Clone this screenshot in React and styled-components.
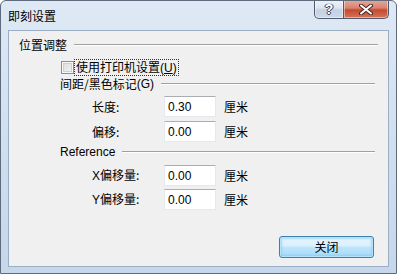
import styled, { createGlobalStyle } from "styled-components";

const GlobalStyle = createGlobalStyle`
    html, body {
        margin: 0;
        padding: 0;
        background: #ffffff;
    }
    body {
        font-family: "Noto Sans CJK SC", "Liberation Sans", sans-serif;
        font-size: 12px;
        color: #000;
    }
`;

const Window = styled.div`
    width: 397px;
    height: 274px;
    box-sizing: border-box;
    display: flex;
    flex-direction: column;
    border: 1px solid #5d6b7c;
    border-radius: 6px 6px 0 0;
    background: linear-gradient(to bottom, #dfe9f5 0%, #d3e1f0 40%, #c6d7eb 100%);
    overflow: hidden;
`;

const TitleBar = styled.div`
    height: 29px;
    display: flex;
    flex-direction: row;
    align-items: flex-start;
    justify-content: space-between;
    padding-left: 7px;
    padding-right: 7px;
`;

const Title = styled.span`
    margin-top: 8px;
    font-size: 12px;
    line-height: 14px;
    color: #000;
`;

const Controls = styled.div`
    display: flex;
    flex-direction: row;
    margin-top: -1px;
`;

const CaptionButton = styled.div`
    width: ${(p) => p.$w}px;
    height: 19px;
    box-sizing: border-box;
    display: flex;
    align-items: center;
    justify-content: center;
    border: 1px solid #4f5b6d;
    border-top: none;
    border-radius: ${(p) => (p.$close ? "0 0 5px 0" : "0 0 0 5px")};
    background: ${(p) =>
        p.$close
            ? "linear-gradient(to bottom, #e9a99b 0%, #d8826d 45%, #c44a31 55%, #d77257 100%)"
            : "linear-gradient(to bottom, #eef3f9 0%, #dbe5f1 45%, #c3d1e3 55%, #cbd9ea 100%)"};
    box-shadow: inset 0 0 0 1px rgba(255, 255, 255, 0.45);
    margin-left: ${(p) => (p.$close ? "-1px" : "0")};
`;

const HelpGlyph = styled.span`
    font-family: "Liberation Sans", sans-serif;
    font-weight: bold;
    font-size: 14px;
    line-height: 14px;
    color: #ffffff;
    text-shadow: 0 0 1px #3a4a60, 0 0 1px #3a4a60, 1px 0 0 #3a4a60, -1px 0 0 #3a4a60, 0 1px 0 #3a4a60;
`;

const Client = styled.div`
    height: 237px;
    box-sizing: border-box;
    margin: 0 7px;
    background: #f0f0f0;
    border: 1px solid #9aaec6;
    display: flex;
    flex-direction: column;
    padding-top: 7px;
`;

const GroupHeader = styled.div`
    display: flex;
    flex-direction: row;
    align-items: center;
    height: 14px;
    line-height: 14px;
    margin-top: ${(p) => p.$top || 0}px;
    padding-left: ${(p) => p.$left}px;
    padding-right: ${(p) => p.$right}px;
    font-family: ${(p) => (p.$latin ? '"Liberation Sans", sans-serif' : "inherit")};
`;

const Rule = styled.div`
    flex: 1;
    height: 0;
    margin-left: ${(p) => p.$gap}px;
    border-top: 1px solid #a0a0a0;
    border-bottom: 1px solid #ffffff;
`;

const CheckRow = styled.label`
    display: flex;
    flex-direction: row;
    align-items: center;
    height: 14px;
    margin-top: 8px;
    padding-left: 52px;
`;

const CheckBox = styled.span`
    width: 13px;
    height: 13px;
    box-sizing: border-box;
    border: 1px solid #8f8f8f;
    background: linear-gradient(135deg, #dcdcdc 0%, #f4f4f4 100%);
    box-shadow: inset 0 0 0 1px #f6f6f6, inset 0 0 0 2px #d0d0d0;
`;

const CheckLabel = styled.span`
    margin-left: 1px;
    padding: 0 1px;
    line-height: 14px;
    outline: 1px dotted #333;
`;

const Key = styled.span`
    font-family: "Liberation Sans", sans-serif;
`;

const FieldRow = styled.div`
    display: flex;
    flex-direction: row;
    align-items: center;
    height: 21px;
    margin-top: ${(p) => p.$top}px;
    padding-left: 83px;
`;

const FieldLabel = styled.span`
    width: 72px;
    line-height: 14px;
`;

const Latin = styled.span`
    font-family: "Liberation Sans", sans-serif;
`;

const Input = styled.div`
    width: 52px;
    height: 21px;
    box-sizing: border-box;
    background: #ffffff;
    border: 1px solid #e3e9ef;
    border-top-color: #abadb3;
    padding-left: 3px;
    display: flex;
    align-items: center;
    font-family: "Liberation Sans", sans-serif;
    font-size: 12px;
`;

const Unit = styled.span`
    margin-left: 8px;
    line-height: 14px;
`;

const Footer = styled.div`
    display: flex;
    flex-direction: row;
    justify-content: flex-end;
    margin-top: 26px;
    padding-right: 14px;
`;

const Button = styled.div`
    width: 95px;
    height: 22px;
    box-sizing: border-box;
    border: 1px solid #3c7fb1;
    border-radius: 3px;
    background: linear-gradient(to bottom, #eaf6fd 0%, #d9f0fc 45%, #bee6fd 50%, #a7d9f5 100%);
    box-shadow: inset 0 0 0 1px #b5e3fc, inset 0 0 2px 2px rgba(120, 200, 245, 0.6);
    display: flex;
    align-items: center;
    justify-content: center;
    line-height: 14px;
`;

const Field = ({ top, label, value }) => (
    <FieldRow $top={top}>
        <FieldLabel>{label}</FieldLabel>
        <Input>{value}</Input>
        <Unit>厘米</Unit>
    </FieldRow>
);

const App = () => {
    return (
        <>
            <GlobalStyle />
            <Window>
                <TitleBar>
                    <Title>即刻设置</Title>
                    <Controls>
                        <CaptionButton $w={30}>
                            <HelpGlyph>?</HelpGlyph>
                        </CaptionButton>
                        <CaptionButton $w={46} $close>
                            <svg width="14" height="11" viewBox="0 0 14 11">
                                <path d="M2 1.5 L12 9.5 M12 1.5 L2 9.5" stroke="#4a2a24" strokeWidth="4" strokeLinecap="round" />
                                <path d="M2 1.5 L12 9.5 M12 1.5 L2 9.5" stroke="#ffffff" strokeWidth="2" strokeLinecap="round" />
                            </svg>
                        </CaptionButton>
                    </Controls>
                </TitleBar>

                <Client>
                    <GroupHeader $left={10} $right={10}>
                        位置调整
                        <Rule $gap={7} />
                    </GroupHeader>

                    <CheckRow>
                        <CheckBox />
                        <CheckLabel>
                            使用打印机设置<Key>(<u>U</u>)</Key>
                        </CheckLabel>
                    </CheckRow>

                    <GroupHeader $top={3} $left={51} $right={13}>
                        间距/黑色标记<Key>(G)</Key>
                        <Rule $gap={7} />
                    </GroupHeader>

                    <Field top={5} label="长度:" value="0.30" />
                    <Field top={4} label="偏移:" value="0.00" />

                    <GroupHeader $top={3} $left={51} $right={13} $latin>
                        Reference
                        <Rule $gap={7} />
                    </GroupHeader>

                    <Field top={6} label={<><Latin>X</Latin>偏移量:</>} value="0.00" />
                    <Field top={3} label={<><Latin>Y</Latin>偏移量:</>} value="0.00" />

                    <Footer>
                        <Button>关闭</Button>
                    </Footer>
                </Client>
            </Window>
        </>
    );
};

export default App;
